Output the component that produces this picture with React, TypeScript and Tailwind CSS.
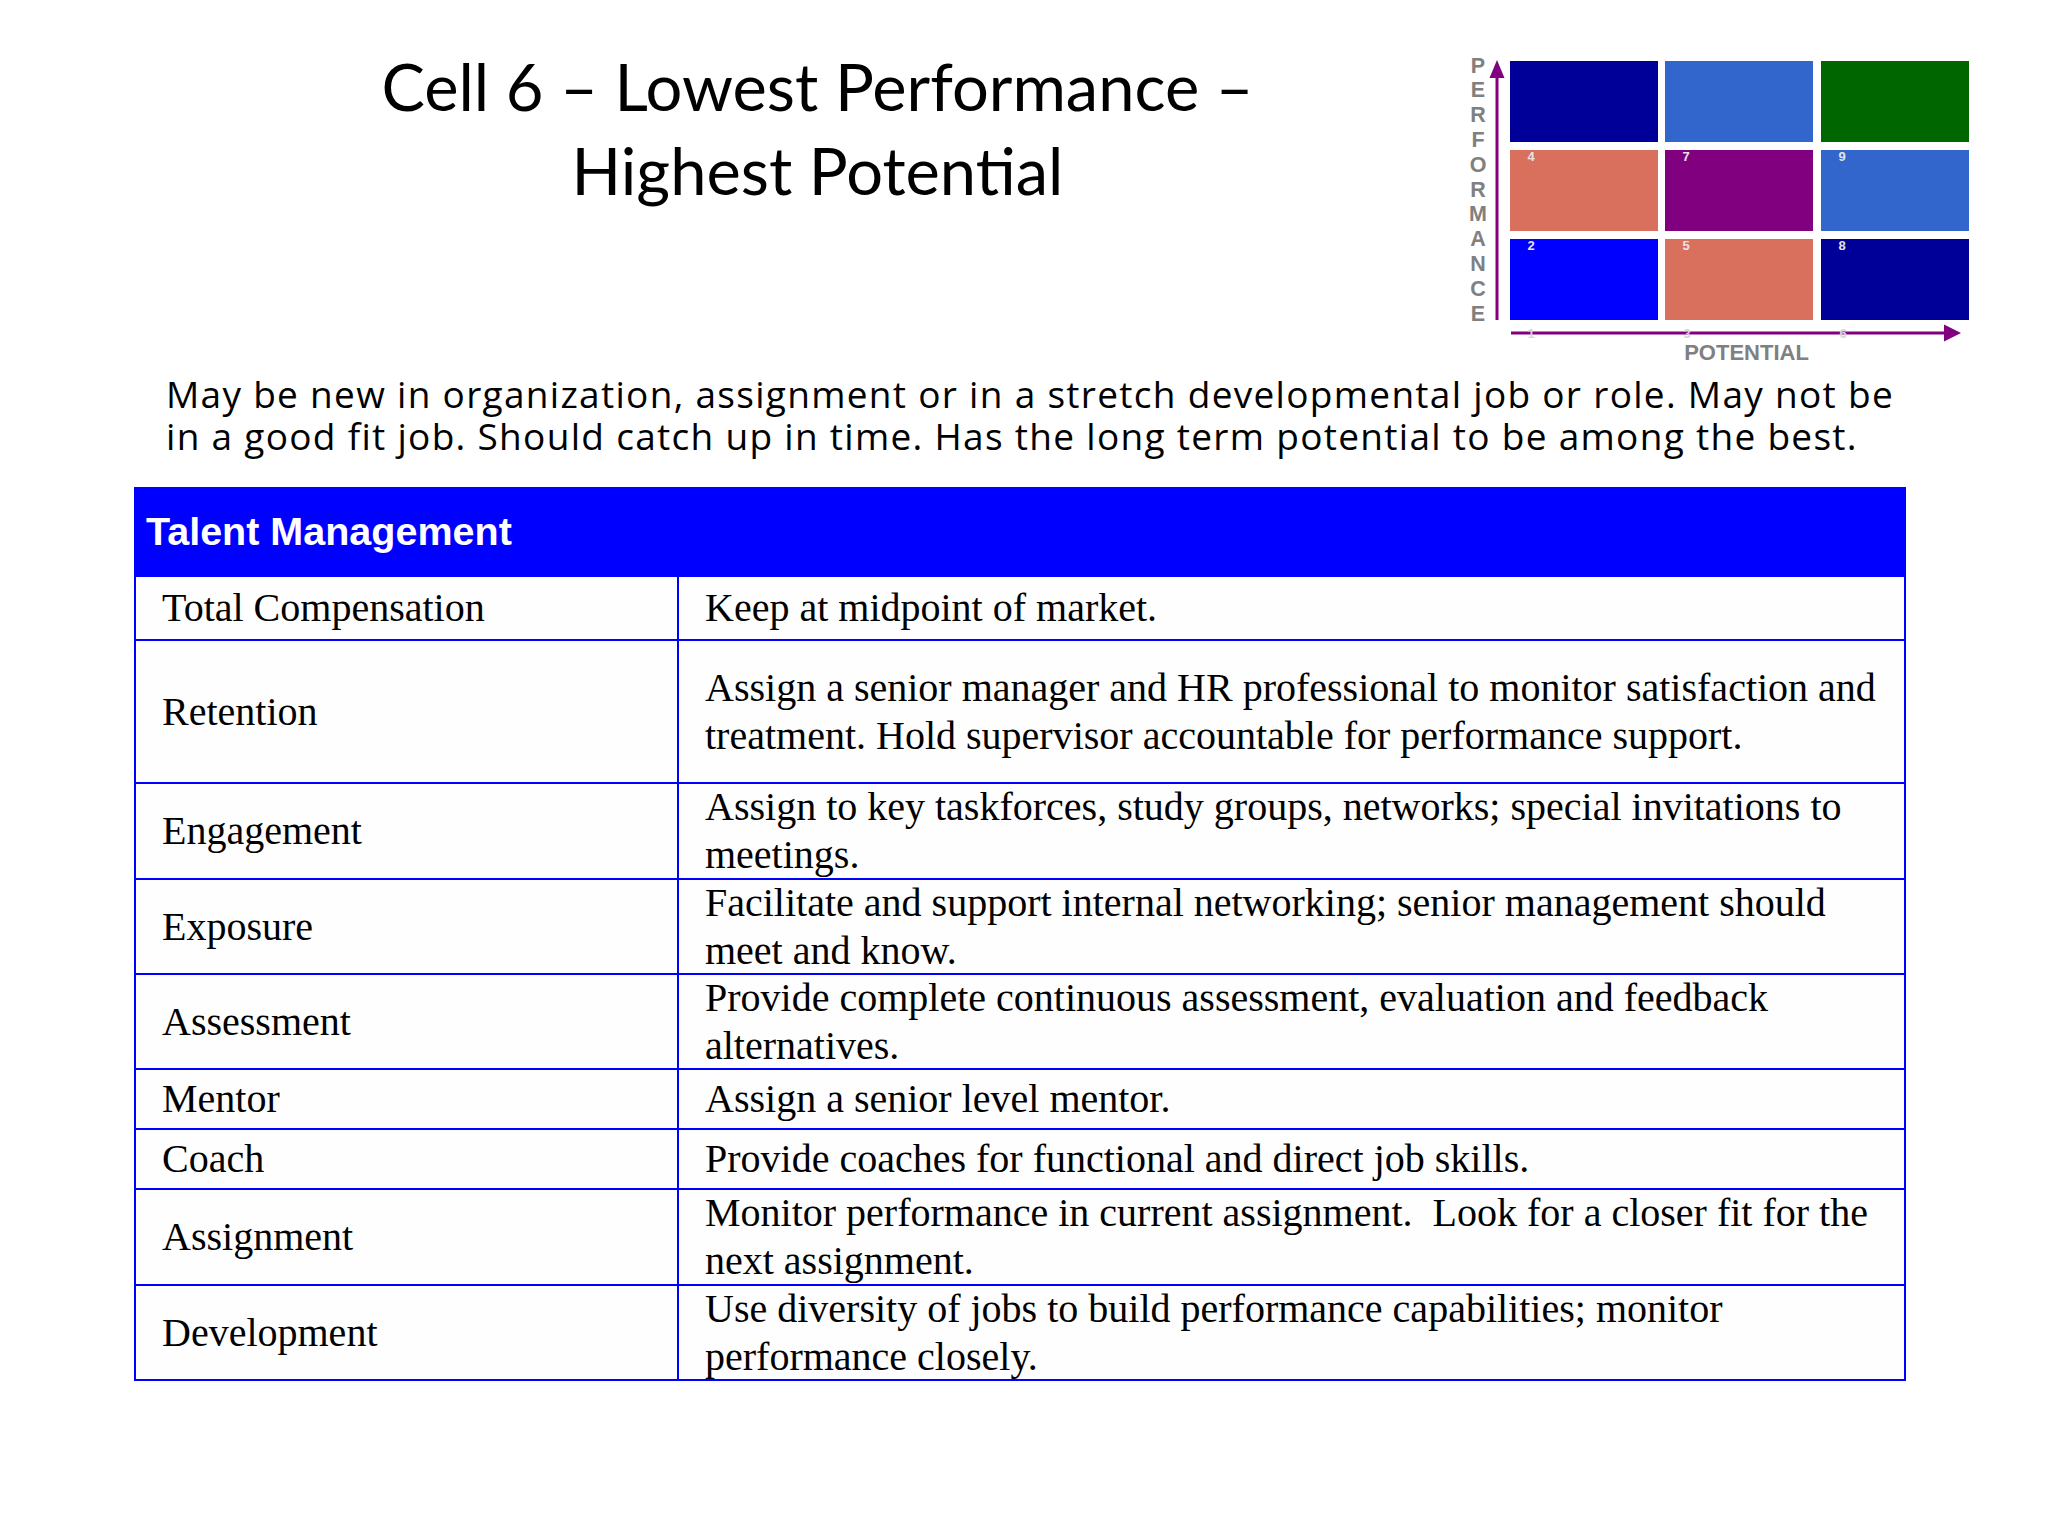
import React from "react";

const rows: { label: string; text: string; h: string }[] = [
  { label: "Total Compensation", text: "Keep at midpoint of market.", h: "h-[64px]" },
  {
    label: "Retention",
    text: "Assign a senior manager and HR professional to monitor satisfaction and treatment. Hold supervisor accountable for performance support.",
    h: "h-[143px]",
  },
  {
    label: "Engagement",
    text: "Assign to key taskforces, study groups, networks; special invitations to meetings.",
    h: "h-[96px]",
  },
  {
    label: "Exposure",
    text: "Facilitate and support internal networking; senior management should meet and know.",
    h: "h-[95px]",
  },
  {
    label: "Assessment",
    text: "Provide complete continuous assessment, evaluation and feedback alternatives.",
    h: "h-[95px]",
  },
  { label: "Mentor", text: "Assign a senior level mentor.", h: "h-[60px]" },
  { label: "Coach", text: "Provide coaches for functional and direct job skills.", h: "h-[60px]" },
  {
    label: "Assignment",
    text: "Monitor performance in current assignment.\u00a0 Look for a closer fit for the next assignment.",
    h: "h-[96px]",
  },
  {
    label: "Development",
    text: "Use diversity of jobs to build performance capabilities; monitor performance closely.",
    h: "h-[95px]",
  },
];

function NineBox() {
  const cols = [50, 205, 361];
  const rowsY = [21, 110, 199];
  const colors = [
    ["#000099", "#3366cc", "#006600"],
    ["#d9705e", "#800080", "#3366cc"],
    ["#0000ff", "#d9705e", "#000099"],
  ];
  const nums: (string | null)[][] = [
    [null, null, null],
    ["4", "7", "9"],
    ["2", "5", "8"],
  ];
  const letters = "PERFORMANCE".split("");
  return (
    <svg width="540" height="330" viewBox="0 0 540 330" className="block">
      {letters.map((l, i) => (
        <text
          key={i}
          x={18}
          y={32.5 + 24.8 * i}
          textAnchor="middle"
          fontFamily="'Liberation Sans', Arial, sans-serif"
          fontWeight="bold"
          fontSize="21.5"
          fill="#808080"
        >
          {l}
        </text>
      ))}
      <line x1={37} y1={36} x2={37} y2={280} stroke="#800080" strokeWidth={3} />
      <polygon points="37,20 29.5,38 44.5,38" fill="#800080" />
      {rowsY.map((y, r) =>
        cols.map((x, c) => (
          <g key={`${r}-${c}`}>
            <rect x={x} y={y} width={148} height={81} fill={colors[r][c]} />
            {nums[r][c] && (
              <text
                x={x + 21}
                y={y + 11}
                textAnchor="middle"
                fontFamily="'Liberation Sans', Arial, sans-serif"
                fontWeight="bold"
                fontSize="13"
                fill="#e4e4e4"
              >
                {nums[r][c]}
              </text>
            )}
          </g>
        ))
      )}
      <line x1={51} y1={293} x2={486} y2={293} stroke="#800080" strokeWidth={3} />
      <polygon points="501,293 484,284.5 484,301.5" fill="#800080" />
      {[
        ["1", 71],
        ["3", 227],
        ["6", 383],
      ].map(([n, x]) => (
        <text
          key={n as string}
          x={x as number}
          y={298}
          textAnchor="middle"
          fontFamily="'Liberation Sans', Arial, sans-serif"
          fontWeight="bold"
          fontSize="13"
          fill="#d6d6d6"
        >
          {n}
        </text>
      ))}
      <text
        x={286.5}
        y={320}
        textAnchor="middle"
        fontFamily="'Liberation Sans', Arial, sans-serif"
        fontWeight="bold"
        fontSize="22"
        fill="#808080"
      >
        POTENTIAL
      </text>
    </svg>
  );
}

export default function App() {
  return (
    <div className="w-[2048px] h-[1536px] bg-white text-black overflow-hidden">
      <div className="flex items-start">
        <div className="ml-[175px] w-[1285px] pt-[44px] text-center font-['Lato',sans-serif] text-[65px] leading-[84px]">
          Cell 6 – Lowest Performance –
          <br />
          Highest Potential
        </div>
        <div className="pt-[40px]">
          <NineBox />
        </div>
      </div>
      <div className="ml-[166px] mt-[3px] font-['Open_Sans',sans-serif] text-[37px] leading-[42px] tracking-[1.3px] whitespace-nowrap">
        May be new in organization, assignment or in a stretch developmental job or role. May not be
        <br />
        in a good fit job. Should catch up in time. Has the long term potential to be among the best.
      </div>
      <div className="ml-[134px] mt-[30px] w-[1772px] border-2 border-[#0000ff] bg-[#fefefe]">
        <div className="h-[86px] bg-[#0000ff] flex items-center pl-[10px] font-['Liberation_Sans',Arial,sans-serif] font-bold text-[39.5px] text-white">
          Talent Management
        </div>
        {rows.map((r) => (
          <div key={r.label} className={`flex border-t-2 border-[#0000ff] ${r.h} font-['Liberation_Serif','Times_New_Roman',serif] text-[40px] leading-[48px]`}>
            <div className="w-[543px] shrink-0 border-r-2 border-[#0000ff] flex items-center pl-[26px]">
              {r.label}
            </div>
            <div className="flex-1 flex items-center pl-[26px] pr-[22px]">
              <span>{r.text}</span>
            </div>
          </div>
        ))}
      </div>
    </div>
  );
}
